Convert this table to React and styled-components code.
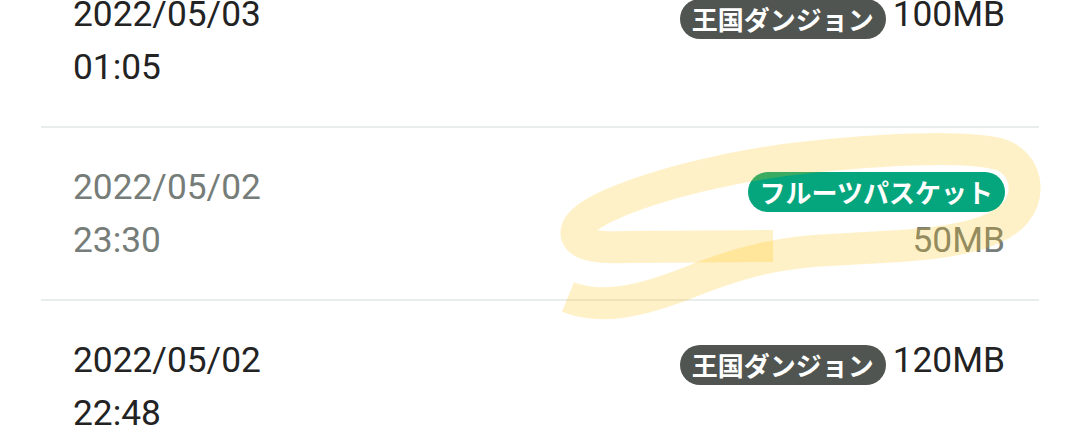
import React from "react";
import styled, { createGlobalStyle } from "styled-components";

const GlobalStyle = createGlobalStyle`
  html, body { margin: 0; padding: 0; background: #ffffff; }
  body { font-family: Roboto, "Noto Sans CJK JP", sans-serif; overflow: hidden; }
`;

const Page = styled.div`
  position: relative;
  width: 1079px;
  height: 429px;
  overflow: hidden;
  background: #ffffff;
`;

const List = styled.ul`
  list-style: none;
  margin: -45px 0 0 0;
  padding: 0 40px 0 41px;
`;

const Row = styled.li`
  display: flex;
  justify-content: space-between;
  align-items: flex-start;
  padding: 33px 34px 32px 32px;
  border-bottom: 2px solid ${(p) => (p.$last ? "transparent" : "#e9edeb")};
`;

const Column = styled.div`
  display: flex;
  flex-direction: column;
  align-items: ${(p) => (p.$right ? "flex-end" : "flex-start")};
`;

const Line = styled.div`
  display: flex;
  align-items: center;
  gap: 7px;
  height: 53px;
  font-family: Roboto, sans-serif;
  font-size: 35.3px;
  line-height: 53px;
  color: ${(p) => (p.$muted ? "#767d79" : "#232323")};
  white-space: nowrap;
`;

const Badge = styled.span`
  display: inline-flex;
  align-items: center;
  height: 40px;
  margin-top: 8px;
  padding: 0 12px;
  border-radius: 20px;
  background: ${(p) => (p.$tone === "green" ? "#05a67d" : "#505552")};
  color: #ffffff;
  font-family: "Noto Sans CJK JP", sans-serif;
  font-weight: 700;
  font-size: 26px;
  line-height: 40px;
  letter-spacing: 0;
`;

const Highlight = styled.svg`
  position: absolute;
  left: 0;
  top: 0;
  width: 1079px;
  height: 429px;
  pointer-events: none;
`;

const rows = [
  { date: "2022/05/03", time: "01:05", tag: "王国ダンジョン", tone: "dark", size: "100MB", inline: true },
  { date: "2022/05/02", time: "23:30", tag: "フルーツパスケット", tone: "green", size: "50MB", inline: false, muted: true },
  { date: "2022/05/02", time: "22:48", tag: "王国ダンジョン", tone: "dark", size: "120MB", inline: true },
];

const INK = "rgb(255,192,0)";
const LOWER = "M 568 297 C 600 310, 640 302, 690 282 C 740 262, 780 252, 830 250";
const FULL =
  LOWER +
  " L 900 246 C 960 242, 1000 232, 1016 212 C 1031 192, 1026 165, 1002 155 C 965 144, 880 150, 810 157 C 740 164, 660 183, 612 204 C 585 216, 574 226, 577 236 C 581 246, 600 248, 625 247 C 680 247, 725 246, 773 246";

export default function App() {
  return (
    <Page>
      <GlobalStyle />
      <List>
        {rows.map((r, i) => (
          <Row key={i} $last={i === rows.length - 1}>
            <Column>
              <Line $muted={r.muted}>{r.date}</Line>
              <Line $muted={r.muted}>{r.time}</Line>
            </Column>
            <Column $right>
              {r.inline ? (
                <Line>
                  <Badge $tone={r.tone}>{r.tag}</Badge>
                  <span>{r.size}</span>
                </Line>
              ) : (
                <>
                  <Line>
                    <Badge $tone={r.tone}>{r.tag}</Badge>
                  </Line>
                  <Line $muted={r.muted}>{r.size}</Line>
                </>
              )}
            </Column>
          </Row>
        ))}
      </List>
      <Highlight viewBox="0 0 1079 429">
        <defs>
          <mask id="lowerStroke" maskUnits="userSpaceOnUse" x="0" y="0" width="1079" height="429">
            <path d={LOWER} fill="none" stroke="#ffffff" strokeWidth="32" strokeLinecap="butt" />
          </mask>
        </defs>
        <path
          d={FULL}
          fill="none"
          stroke={INK}
          strokeOpacity="0.22"
          strokeWidth="32"
          strokeLinecap="butt"
          strokeLinejoin="round"
        />
        <path
          d="M 640 247 C 680 247, 725 246, 773 246"
          fill="none"
          stroke={INK}
          strokeOpacity="0.22"
          strokeWidth="32"
          strokeLinecap="butt"
          mask="url(#lowerStroke)"
        />
      </Highlight>
    </Page>
  );
}
